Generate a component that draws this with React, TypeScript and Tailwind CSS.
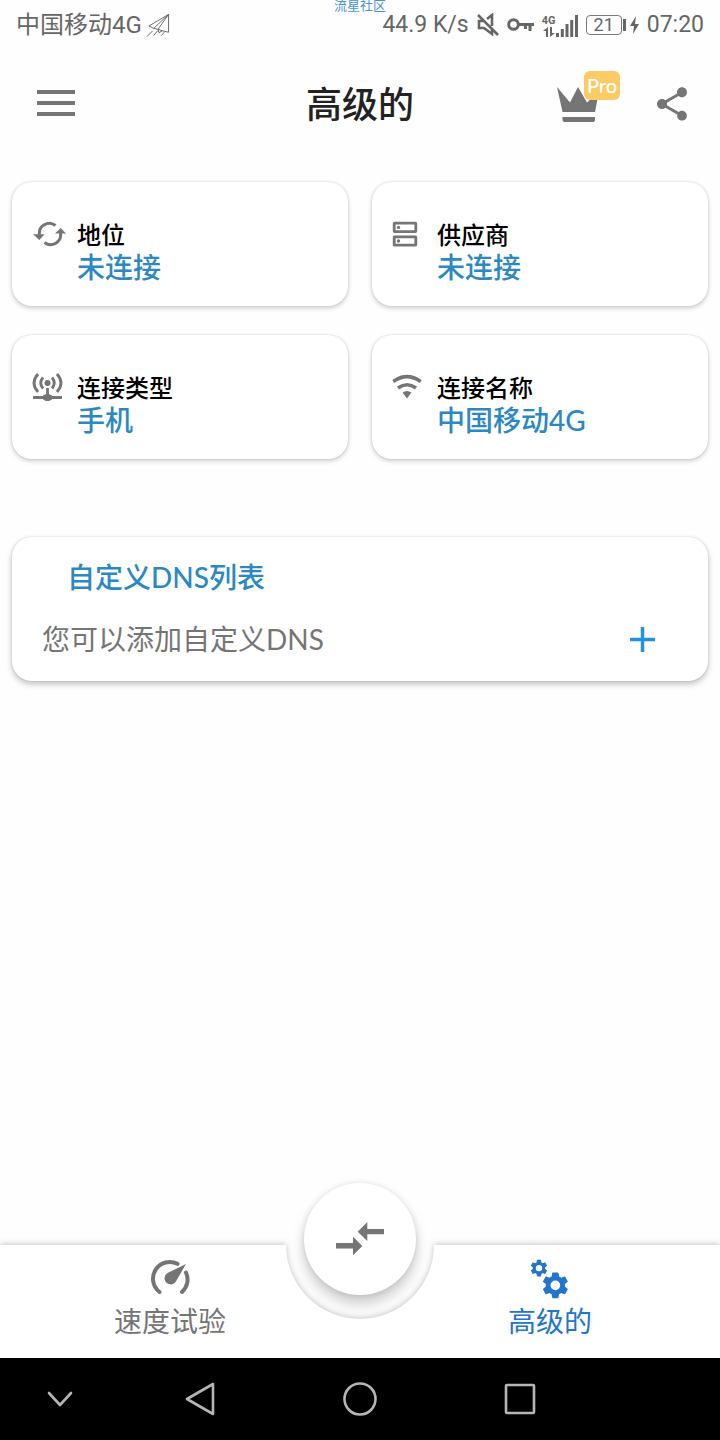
import type { ReactNode } from "react";
import { MdShare } from "react-icons/md";

const GEAR =
  "M19.43 12.98c.04-.32.07-.64.07-.98s-.03-.66-.07-.98l2.11-1.65c.19-.15.24-.42.12-.64l-2-3.46c-.12-.22-.39-.3-.61-.22l-2.49 1c-.52-.4-1.08-.73-1.69-.98l-.38-2.65C14.46 2.18 14.25 2 14 2h-4c-.25 0-.46.18-.49.42l-.38 2.65c-.61.25-1.17.59-1.69.98l-2.49-1c-.23-.09-.49 0-.61.22l-2 3.46c-.13.22-.07.49.12.64l2.11 1.65c-.04.32-.07.65-.07.98s.03.66.07.98l-2.11 1.65c-.19.15-.24.42-.12.64l2 3.46c.12.22.39.3.61.22l2.49-1c.52.4 1.08.73 1.69.98l.38 2.65c.03.24.24.42.49.42h4c.25 0 .46-.18.49-.42l.38-2.65c.61-.25 1.17-.59 1.69-.98l2.49 1c.23.09.49 0 .61-.22l2-3.46c.12-.22.07-.49-.12-.64l-2.11-1.65zM12 15.8a3.8 3.8 0 1 1 0-7.6 3.8 3.8 0 0 1 0 7.6z";

interface InfoItem {
  label: string;
  value: string;
  icon: ReactNode;
}

const items: InfoItem[] = [
  { label: "地位", value: "未连接", icon: <SyncIcon /> },
  { label: "供应商", value: "未连接", icon: <ServerIcon /> },
  { label: "连接类型", value: "手机", icon: <AntennaIcon /> },
  { label: "连接名称", value: "中国移动4G", icon: <WifiIcon /> },
];

export default function App() {
  return (
    <div className="flex min-h-screen flex-col bg-[#fefefe] font-[Lato,'Noto_Sans_CJK_SC',sans-serif] text-[#757575]">
      <StatusBar />
      <Header />
      <main className="flex-1 px-3 pt-6">
        <div className="grid grid-cols-2 gap-x-6 gap-y-[29px]">
          {items.map((item) => (
            <InfoCard key={item.label} {...item} />
          ))}
        </div>
        <DnsCard />
      </main>
      <BottomNav />
      <SystemNav />
    </div>
  );
}

function StatusBar() {
  return (
    <div className="relative flex h-[50px] items-center justify-between px-4 font-[Roboto,'Noto_Sans_CJK_SC',sans-serif] text-[23px] text-[#666]">
      <span className="absolute top-0 left-1/2 -translate-x-1/2 text-[13px] leading-3 text-[#4a90d9]">流星社区</span>
      <div className="flex items-center gap-1">
        <span className="text-2xl">中国移动4G</span>
        <svg width="24" height="25" viewBox="0 0 25 25" fill="none" stroke="currentColor" strokeWidth="1">
          <path d="M23.5 1 3 13l5 2.5L23.5 1v18.5l-6.5-1.5-3.5 2-1-3.5L23.5 1M8 15.5l4.5 1M12.5 16.5l4.5 1.5M1 24l6-6M8 23l4-5M16 23l3-3.5" />
        </svg>
      </div>
      <div className="flex items-center gap-2">
        <span>44.9 K/s</span>
        <svg width="22" height="24" viewBox="0 0 22 24" fill="none" stroke="currentColor" strokeWidth="2.6">
          <path d="M1 2l20 20M7 8H2v7h5l8 6v-5M10 6l5-4v11" />
        </svg>
        <svg width="27" height="16" viewBox="0 0 27 16" fill="none" stroke="currentColor" strokeWidth="3">
          <circle cx="6.5" cy="7.5" r="4.8" />
          <path d="M11 7.5h16M23 8v6M18.5 8v4" />
        </svg>
        <div className="flex h-6 items-end">
          <div className="flex flex-col items-center">
            <span className="text-[11px] leading-3 font-bold">4G</span>
            <svg width="14" height="10" viewBox="0 0 14 10" fill="currentColor">
              <path d="M6 0v10H4V4H1zM8 10V0h2v6h3z" />
            </svg>
          </div>
          <svg width="22" height="22" viewBox="0 0 22 22" fill="currentColor">
            <path d="M0 18h3v4H0zM4.800 14h3v8h-3zM9.500 9h3v13h-3zM14.200 5h3v17h-3zM19 0h3v22h-3z" />
          </svg>
        </div>
        <div className="flex items-center">
          <span className="flex h-5 w-9 items-center justify-center rounded-sm border border-[#777] text-[18px] leading-none">21</span>
          <span className="mr-1 ml-px h-3 w-[3px] bg-[#666]" />
          <svg width="9" height="18" viewBox="0 0 9 18" fill="currentColor">
            <path d="M6 0 0 10h4l-1 8 6-10H5z" />
          </svg>
        </div>
        <span>07:20</span>
      </div>
    </div>
  );
}

function Header() {
  return (
    <header className="grid h-[108px] grid-cols-[1fr_auto_1fr] items-center px-8">
      <button type="button" aria-label="菜单" className="w-fit px-[5px]">
        <svg width="38" height="28" viewBox="0 0 38 28" fill="currentColor" className="block">
          <path d="M0 0h38v4H0zM0 11h38v4H0zM0 22h38v4H0z" />
        </svg>
      </button>
      <h1 className="text-4xl font-medium text-[#222]">高级的</h1>
      <div className="flex items-center justify-end gap-[53px]">
        <button type="button" className="relative">
          <svg width="42" height="35" viewBox="0 0 42 35" fill="currentColor" className="block">
            <path d="M0 0 13 15.500 21 0 30 15.500 42 4 38 25H5.500zM5.500 30H38v3q0 2-2 2H7.500q-2 0-2-2z" />
          </svg>
          <span className="absolute -top-4 left-[27px] flex h-[29px] w-9 items-center justify-center rounded-md bg-[#fdcb66] text-xl leading-none font-medium text-white">
            Pro
          </span>
        </button>
        <button type="button" aria-label="分享">
          <MdShare className="-mr-1 size-10" />
        </button>
      </div>
    </header>
  );
}

function InfoCard({ label, value, icon }: InfoItem) {
  return (
    <section className="flex rounded-[20px] bg-white pt-9 pr-4 pb-[22px] pl-5 shadow-[0_2px_5px_rgba(0,0,0,0.2),0_0_2px_rgba(0,0,0,0.14)]">
      <div className="flex h-8 w-[45px] shrink-0 items-center">{icon}</div>
      <div>
        <h2 className="text-2xl leading-[33px] font-medium text-black">{label}</h2>
        <p className="text-[28px] leading-[33px] font-medium text-[#2b88c3]">{value}</p>
      </div>
    </section>
  );
}

function DnsCard() {
  return (
    <section className="mt-[78px] rounded-[20px] bg-white pt-5 shadow-[0_3px_6px_rgba(0,0,0,0.25),0_0_2px_rgba(0,0,0,0.14)]">
      <h2 className="pl-[55px] text-[28px] leading-10 font-medium text-[#2b88c3]">自定义DNS列表</h2>
      <div className="flex h-[84px] items-center justify-between pr-[53px] pl-[30px]">
        <p className="text-[28px]">您可以添加自定义DNS</p>
        <button type="button" aria-label="添加" className="text-[#2490e2]">
          <svg width="25" height="25" viewBox="0 0 25 25" stroke="currentColor" strokeWidth="3.5" className="block">
            <path d="M12.500 0v25M0 12.500h25" />
          </svg>
        </button>
      </div>
    </section>
  );
}

function BottomNav() {
  return (
    <nav className="relative h-[113px]">
      {/* bar with the notch cut out, shadow follows the outline */}
      <div className="absolute inset-0 flex drop-shadow-[0_-1px_3px_rgba(0,0,0,0.22)]">
        <div className="flex-1 bg-white" />
        <svg width="150" height="113" viewBox="0 0 150 113" fill="#fff" className="block">
          <path d="M0 0h1a74 74 0 0 0 148 0h1v113H0z" />
        </svg>
        <div className="flex-1 bg-white" />
      </div>
      <div className="relative flex h-full">
        <a href="#speed" className="flex flex-1 flex-col items-center gap-[2px] pt-[14px]">
          <GaugeIcon />
          <span className="text-[28px] leading-10">速度试验</span>
        </a>
        <div className="w-10" />
        <a href="#advanced" aria-current="page" className="flex flex-1 flex-col items-center gap-[2px] pt-[14px] text-[#2275cb]">
          <GearsIcon />
          <span className="text-[28px] leading-10">高级的</span>
        </a>
      </div>
      <button
        type="button"
        aria-label="连接"
        className="absolute -top-[62px] left-1/2 flex size-28 -translate-x-1/2 items-center justify-center rounded-full bg-white shadow-[0_9px_14px_rgba(0,0,0,0.2),0_0_6px_rgba(0,0,0,0.1)]"
      >
        <svg width="48" height="34" viewBox="0 0 48 34" fill="currentColor">
          <path d="M0 21h17v-6.300L26.300 24 17 33.300v-6.800H0zM48 7H31.300V0L21.700 9.700l9.600 9.300v-6.700H48z" />
        </svg>
      </button>
    </nav>
  );
}

function SystemNav() {
  return (
    <div className="relative grid h-[82px] grid-cols-[3fr_4fr_4fr_4fr_3fr] items-center justify-items-center bg-black text-[#b5b5b5]">
      <button type="button" aria-label="收起">
        <SystemIcon><path d="m7 12 11 12 11-12" /></SystemIcon>
      </button>
      <button type="button" aria-label="返回">
        <SystemIcon><path d="M31 3v30L5 18z" /></SystemIcon>
      </button>
      <button type="button" aria-label="主页">
        <SystemIcon><circle cx="18" cy="18" r="15.5" /></SystemIcon>
      </button>
      <button type="button" aria-label="最近">
        <SystemIcon><rect x="4" y="4" width="28" height="28" rx="1" /></SystemIcon>
      </button>
    </div>
  );
}

function SystemIcon({ children }: { children: ReactNode }) {
  return (
    <svg width="36" height="36" viewBox="0 0 36 36" fill="none" stroke="currentColor" strokeWidth="2.6" strokeLinecap="round" strokeLinejoin="round" className="block">
      {children}
    </svg>
  );
}

function SyncIcon() {
  return (
    <svg width="34" height="26" viewBox="0 0 34 26" className="ml-px">
      <path d="M22.500 4.500A10 10 0 0 0 6.500 14M11.500 21.500A10 10 0 0 0 27.500 12" fill="none" stroke="currentColor" strokeWidth="3" />
      <path d="M0 13.300h11.600L6.300 19zM22 12.500H33L27.700 7z" fill="currentColor" />
    </svg>
  );
}

function ServerIcon() {
  return (
    <svg width="26" height="26" viewBox="0 0 26 26" fill="none" stroke="currentColor" strokeWidth="2.8">
      <rect x="2.2" y="2.2" width="21.600" height="8.4" rx=".5" />
      <rect x="2.2" y="15.8" width="21.600" height="8.4" rx=".5" />
      <circle cx="6.5" cy="6.4" r="1.7" fill="currentColor" stroke="none" />
      <circle cx="6.5" cy="20" r="1.7" fill="currentColor" stroke="none" />
    </svg>
  );
}

function AntennaIcon() {
  return (
    <svg width="31" height="28" viewBox="0 0 31 28" fill="none" stroke="currentColor" strokeWidth="2.8">
      <path d="M6 1q-8 9 0 18M11 4.500q-4.500 5.500 0 11M25 1q8 9 0 18M20 4.500q4.500 5.500 0 11M15.500 15v8M1 24.500h29" />
      <circle cx="15.5" cy="10" r="3" fill="currentColor" stroke="none" />
      <path d="M11 22.500 14 21h3l3 1.500v4L17 28h-3l-3-1.500z" fill="currentColor" stroke="none" />
    </svg>
  );
}

function WifiIcon() {
  return (
    <svg width="30" height="26" viewBox="0 0 30 26" fill="none" stroke="currentColor" strokeWidth="3.6">
      <path d="M1.300 7.500q13.700-9.800 27.400 0M6 14q9-6.500 18 0" />
      <path d="M10.500 18.500q4.500-3 9 0L15 24.500z" fill="currentColor" stroke="none" />
    </svg>
  );
}

function GaugeIcon() {
  return (
    <svg width="40" height="40" viewBox="0 0 40 40" fill="none" stroke="currentColor" strokeWidth="4" strokeLinecap="round">
      <path d="M9.500 33A16.800 16.800 0 0 1 27.500 4.800" />
      <path d="M36 13.500A16.800 16.800 0 0 1 32 33" />
      <path d="M36 5 26.500 21.500a6.200 6.200 0 1 1-9-7.500z" fill="currentColor" stroke="none" />
    </svg>
  );
}

function GearsIcon() {
  return (
    <svg width="40" height="40" viewBox="0 0 40 40" fill="currentColor">
      <path d={GEAR} transform="translate(-1 -.8) scale(.83)" />
      <path d={GEAR} transform="translate(10 11) scale(1.28)" />
    </svg>
  );
}
